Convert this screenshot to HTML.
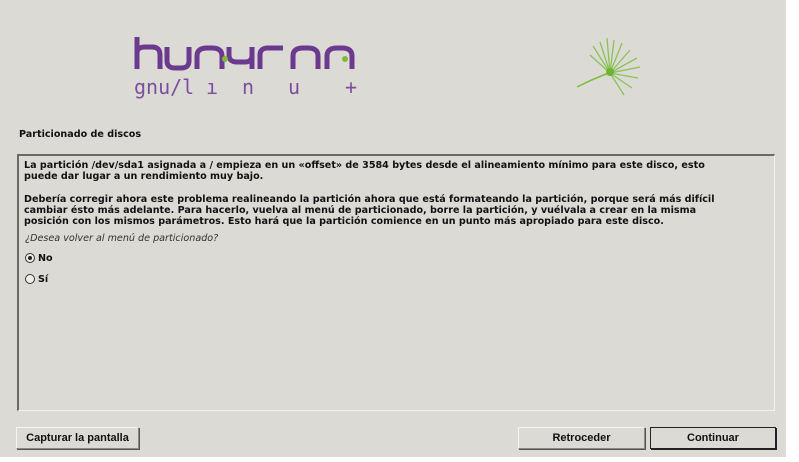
<!DOCTYPE html>
<html><head><meta charset="utf-8"><style>
body{margin:0;width:799px;height:462px;background:#fff;position:relative;overflow:hidden;font-family:"DejaVu Sans",sans-serif}
#bg{position:absolute;left:0;top:0;width:786px;height:457px;background:#dcdad5}
.t{position:absolute;white-space:nowrap;font-size:9.6px;font-weight:bold;color:#111;line-height:11px}
#box{position:absolute;left:17px;top:154px;width:758px;height:257px;border-top:2px solid #6b6a66;border-left:2px solid #6b6a66;border-right:1px solid #f3f2ef;border-bottom:1px solid #f3f2ef;box-sizing:border-box}
.btn{position:absolute;height:22px;box-sizing:border-box;background:#dcdad5;border:1px solid #8a8985;border-top-color:#f5f4f1;border-left-color:#f5f4f1;box-shadow:1px 1px 0 #555;font-family:"Liberation Sans Narrow","Liberation Sans",sans-serif;font-size:11px;font-weight:bold;text-align:center;line-height:20px;color:#111}
.r{position:absolute;width:10px;height:10px;border:1px solid #333;border-radius:50%;box-sizing:border-box;background:#eeede9}
</style></head><body>
<div id="bg"></div>
<svg style="position:absolute;left:0;top:0" width="786" height="130">
<g fill="none" stroke="#6b3a8e" stroke-width="5" stroke-linecap="butt">
<path d="M137 37 V69 M137 53 Q137 47 145 47 H152 Q160 47 160 55 V69"/>
<path d="M167 47 V61 Q167 68 175 68 H181 Q189 68 189 61 V47"/>
<path d="M197 69 V56 Q197 48 207 48 H212 Q222 48 222 56 V69"/>
<path d="M229 47 V55 Q229 62 237 62 H245 Q252 62 252 55 V47 M252 55 V69"/>
<path d="M260 69 V55 Q260 48 268 48 H283"/>
<path d="M293 69 V56 Q293 48 303 48 H308 Q318 48 318 56 V69"/>
<path d="M327 69 V56 Q327 48 337 48 H342 Q352 48 352 56 V69"/>
</g>
<circle cx="225" cy="59" r="3" fill="#7cba3c"/><circle cx="345" cy="59" r="3" fill="#7cba3c"/>
<g font-family="DejaVu Sans Mono,monospace" font-size="20" fill="#7b4f9e">
<text x="134" y="94">gnu/l</text><text x="206" y="94">ı</text><text x="242" y="94">n</text><text x="288" y="94">u</text><text x="345" y="94">+</text>
</g>
<g stroke="#7cbf3e" stroke-width="1.3" opacity="0.85">
<path d="M610 73 L593 46 M610 73 L600 42 M610 73 L607 38 M610 73 L614 40 M610 73 L622 43 M610 73 L630 50 M610 73 L637 58 M610 73 L640 67 M610 73 L638 78 M610 73 L632 88 M610 73 L624 95 M610 73 L590 55"/>
</g>
<path d="M577 87 Q595 78 609 73" stroke="#7cbf3e" stroke-width="1.5" fill="none"/>
<circle cx="610" cy="72" r="4" fill="#6fb334"/>
</svg>
<div class="t" style="left:19px;top:129px">Particionado de discos</div>
<div id="box"></div>
<div class="t" style="left:24px;top:160px">La partición /dev/sda1 asignada a / empieza en un «offset» de 3584 bytes desde el alineamiento mínimo para este disco, esto</div>
<div class="t" style="left:24px;top:171px">puede dar lugar a un rendimiento muy bajo.</div>
<div class="t" style="left:24px;top:194px">Debería corregir ahora este problema realineando la partición ahora que está formateando la partición, porque será más difícil</div>
<div class="t" style="left:24px;top:205px">cambiar ésto más adelante. Para hacerlo, vuelva al menú de particionado, borre la partición, y vuélvala a crear en la misma</div>
<div class="t" style="left:24px;top:216px">posición con los mismos parámetros. Esto hará que la partición comience en un punto más apropiado para este disco.</div>
<div class="t" style="left:25px;top:233px;font-weight:normal;font-style:italic;color:#333">¿Desea volver al menú de particionado?</div>
<div class="r" style="left:25px;top:253px"></div><div style="position:absolute;left:28px;top:256px;width:4px;height:4px;border-radius:50%;background:#222"></div>
<div class="t" style="left:38px;top:253px">No</div>
<div class="r" style="left:25px;top:274px"></div>
<div class="t" style="left:38px;top:274px">Sí</div>
<div class="btn" style="left:16px;top:427px;width:123px">Capturar la pantalla</div>
<div class="btn" style="left:518px;top:427px;width:127px">Retroceder</div>
<div class="btn" style="left:650px;top:427px;width:126px;border:1px solid #222;box-shadow:1px 1px 0 #222">Continuar</div>
</body></html>
